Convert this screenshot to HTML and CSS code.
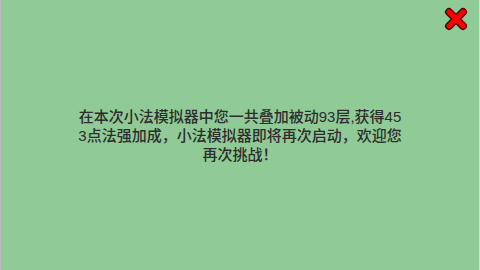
FILE: index.html
```html
<!DOCTYPE html>
<html lang="zh">
<head>
<meta charset="utf-8">
<link rel="stylesheet" href="styles.css">
</head>
<body>
<div class="screen">
  <button class="close" aria-label="关闭">
    <svg width="26" height="26" viewBox="0 0 26 26">
      <path d="M6 6 L20 20 M20 6 L6 20" stroke="#4a0a0a" stroke-width="8" stroke-linecap="round"/>
      <path d="M6 6 L20 20 M20 6 L6 20" stroke="#ff0000" stroke-width="5" stroke-linecap="round"/>
    </svg>
  </button>
  <p class="message">在本次小法模拟器中您一共叠加被动93层,获得453点法强加成，小法模拟器即将再次启动，欢迎您再次挑战！</p>
</div>
</body>
</html>
```
FILE: styles.css
```css
html, body {
  margin: 0;
  padding: 0;
}
body {
  width: 480px;
  height: 270px;
  overflow: hidden;
}
.screen {
  box-sizing: border-box;
  width: 480px;
  height: 270px;
  background: #90ca96;
  border-left: 1px solid #b4bcb5;
  border-right: 1px solid #c9e3cc;
  display: flex;
  align-items: center;
  justify-content: center;
  position: relative;
}
.message {
  margin: 0;
  width: 326px;
  font-family: "Liberation Sans", "Noto Sans CJK SC", sans-serif;
  font-size: 15px;
  font-weight: 500;
  line-height: 19px;
  color: #2e2e2e;
  text-align: center;
  word-break: break-all;
}
.close {
  position: absolute;
  top: 6px;
  right: 10px;
  padding: 0;
  border: 0;
  background: none;
  width: 26px;
  height: 26px;
}
.close svg {
  display: block;
}
```
